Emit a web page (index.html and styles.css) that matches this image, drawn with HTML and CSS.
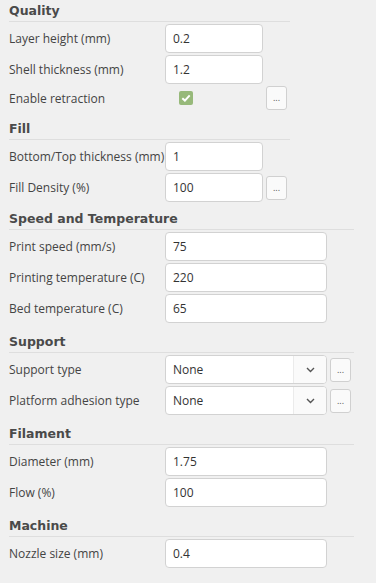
FILE: index.html
```html
<!DOCTYPE html>
<html lang="en">
<head>
    <meta charset="UTF-8">
    <meta name="viewport" content="width=device-width, initial-scale=1.0">
    <title>Print settings</title>
    <link rel="stylesheet" href="styles.css">
</head>
<body>
    <div class="panel">
        <div class="section narrow">
            <h3>Quality</h3>
            <div class="row">
                <label>Layer height (mm)</label>
                <input type="text" value="0.2">
            </div>
            <div class="row">
                <label>Shell thickness (mm)</label>
                <input type="text" value="1.2">
            </div>
            <div class="row short">
                <label>Enable retraction</label>
                <span class="check">
                    <svg width="10" height="8" viewBox="0 0 10 8"><path d="M1.3 4.2 L3.9 6.6 L8.7 1.4" fill="none" stroke="#fff" stroke-width="2"/></svg>
                </span>
                <button class="more">...</button>
            </div>
        </div>

        <div class="section narrow">
            <h3>Fill</h3>
            <div class="row">
                <label>Bottom/Top thickness (mm)</label>
                <input type="text" value="1">
            </div>
            <div class="row">
                <label>Fill Density (%)</label>
                <input type="text" value="100">
                <button class="more">...</button>
            </div>
        </div>

        <div class="section tight">
            <h3>Speed and Temperature</h3>
            <div class="row">
                <label>Print speed (mm/s)</label>
                <input type="text" value="75">
            </div>
            <div class="row">
                <label>Printing temperature (C)</label>
                <input type="text" value="220">
            </div>
            <div class="row">
                <label>Bed temperature (C)</label>
                <input type="text" value="65">
            </div>
        </div>

        <div class="section">
            <h3>Support</h3>
            <div class="row">
                <label>Support type</label>
                <div class="select">
                    <span class="value">None</span>
                    <span class="arrow"><svg width="9" height="6" viewBox="0 0 9 6"><path d="M1 1 L4.5 4.5 L8 1" fill="none" stroke="#555" stroke-width="1.4"/></svg></span>
                </div>
                <button class="more">...</button>
            </div>
            <div class="row">
                <label>Platform adhesion type</label>
                <div class="select">
                    <span class="value">None</span>
                    <span class="arrow"><svg width="9" height="6" viewBox="0 0 9 6"><path d="M1 1 L4.5 4.5 L8 1" fill="none" stroke="#555" stroke-width="1.4"/></svg></span>
                </div>
                <button class="more">...</button>
            </div>
        </div>

        <div class="section">
            <h3>Filament</h3>
            <div class="row">
                <label>Diameter (mm)</label>
                <input type="text" value="1.75">
            </div>
            <div class="row">
                <label>Flow (%)</label>
                <input type="text" value="100">
            </div>
        </div>

        <div class="section">
            <h3>Machine</h3>
            <div class="row">
                <label>Nozzle size (mm)</label>
                <input type="text" value="0.4">
            </div>
        </div>
    </div>
</body>
</html>
```

FILE: styles.css
```css
*{
    margin:0;
    padding:0;
    box-sizing:border-box;
    font-family:'Open Sans', sans-serif;
}
body{
    background:#f0f0f0;
    color:#444;
}
.panel{
    padding-left:9px;
}
.section{
    width:fit-content;
    margin-top:8px;
    --field:162px;
}
.section:first-child{
    margin-top:0;
}
.section.tight{
    margin-top:6px;
}
.section.narrow{
    --field:98px;
}
.section h3{
    font-family:'DejaVu Sans', sans-serif;
    font-size:12.5px;
    font-weight:700;
    line-height:21px;
    border-bottom:1px solid #dedede;
    color:#4a4a4a;
}
.row{
    display:grid;
    grid-template-columns:153px var(--field) 21px;
    column-gap:3px;
    align-items:center;
    height:29px;
    margin-top:2px;
    padding-right:3px;
}
.row.short{
    height:24px;
}
.row label{
    font-size:12px;
    color:#444;
    white-space:nowrap;
}
.row input{
    grid-column:2;
    width:100%;
    height:29px;
    border:1px solid #d2d2d2;
    border-radius:4px;
    background:#fff;
    padding:0 7px;
    font-size:12px;
    color:#333;
    outline:0;
}
.more{
    grid-column:3;
    width:21px;
    height:24px;
    border:1px solid #d0d0d0;
    border-radius:3px;
    background:#fafafa;
    color:#555;
    font-size:9px;
    line-height:20px;
    text-align:center;
}
.check{
    grid-column:2;
    width:14px;
    height:14px;
    margin-left:14px;
    border-radius:2px;
    background:#97b97a;
    display:flex;
    align-items:center;
    justify-content:center;
}
.check svg{
    display:block;
}
.select{
    grid-column:2;
    display:flex;
    height:29px;
    border:1px solid #d2d2d2;
    border-radius:4px;
    background:#fff;
    overflow:hidden;
}
.select .value{
    flex:1;
    padding-left:7px;
    font-size:12px;
    line-height:27px;
    color:#333;
}
.select .arrow{
    width:33px;
    border-left:1px solid #ebebeb;
    background:#fafafa;
    display:flex;
    align-items:center;
    justify-content:center;
}
```
